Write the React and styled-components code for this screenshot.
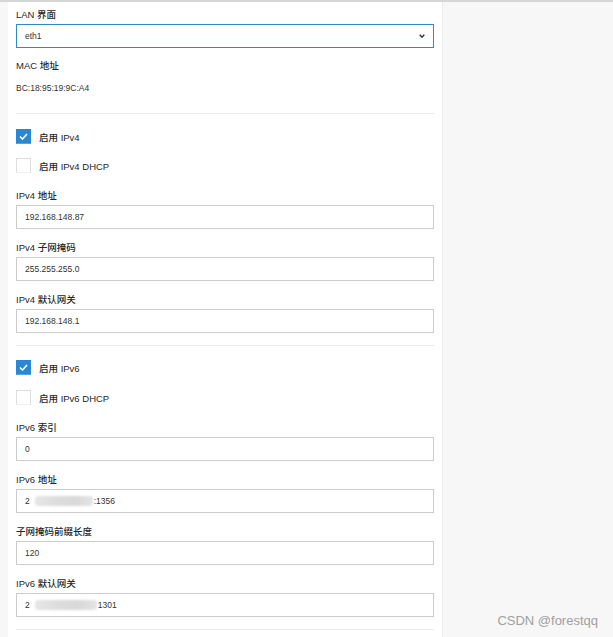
import React from "react";
import styled, { createGlobalStyle } from "styled-components";

const GlobalStyle = createGlobalStyle`
  html, body {
    margin: 0;
    padding: 0;
    background: #f7f7f7;
  }
  body {
    font-family: "Liberation Sans", "Noto Sans CJK SC", sans-serif;
    color: #333;
  }
`;

const Page = styled.div`
  position: relative;
  display: flex;
  min-height: 637px;
  border-top: 2px solid #d6d6d6;
  box-sizing: border-box;
  padding-left: 8px;
`;

const Panel = styled.div`
  width: 435px;
  box-sizing: border-box;
  background: #fff;
  border-right: 1px solid #ececec;
  padding: 6px 8px 0 8px;
`;

const Field = styled.div`
  margin-top: ${p => p.$top || 0}px;
  margin-bottom: ${p => (p.$bottom === undefined ? 12 : p.$bottom)}px;
`;

const Label = styled.div`
  height: 14px;
  line-height: 14px;
  font-size: 9.5px;
  font-weight: 500;
  color: #262626;
  margin-bottom: 2px;
  white-space: nowrap;
`;

const Static = styled.div`
  margin-top: 8px;
  height: 14px;
  line-height: 14px;
  font-size: 8.5px;
  color: #333;
`;

const Box = styled.div`
  display: flex;
  align-items: center;
  height: 24px;
  box-sizing: border-box;
  border: 1px solid ${p => (p.$focus ? "#2e8bc6" : "#cbcbcb")};
  padding: 0 8px;
  font-size: 8.5px;
  color: #333;
  background: #fff;
`;

const Grow = styled.span`
  flex: 1;
`;

const Chevron = styled.svg`
  width: 6px;
  height: 4px;
  margin-right: 0;
`;

const Hidden = styled.span`
  display: inline-block;
  width: ${p => p.$w}px;
  height: 10px;
  margin: 0 1px 0 5px;
  background: linear-gradient(90deg, #e6e6e6, #dcdcdc 40%, #d9d9d9 70%, #e4e4e4);
  border-radius: 3px;
  filter: blur(1.2px);
`;

const Divider = styled.div`
  height: 1px;
  background: #ebebeb;
  margin-top: ${p => p.$top || 0}px;
`;

const CheckRow = styled.label`
  display: flex;
  align-items: center;
  gap: 8px;
  height: 15px;
  margin-top: ${p => p.$top}px;
  font-size: 9.5px;
  font-weight: 500;
  color: #262626;
`;

const Tick = styled.span`
  display: flex;
  align-items: center;
  justify-content: center;
  width: 15px;
  height: 15px;
  box-sizing: border-box;
  background: ${p => (p.$on ? "#2b87d1" : "#fff")};
  border: 1px solid ${p => (p.$on ? "#2b87d1" : "#dedede")};
  border-bottom-color: ${p => (p.$on ? "#5aa3dc" : "#f0f0f0")};
`;

const Watermark = styled.div`
  position: absolute;
  right: 15px;
  bottom: 9px;
  font-size: 13px;
  color: #a0a0a0;
`;

function Check({ on, text, top }) {
  return (
    <CheckRow $top={top}>
      <Tick $on={on}>
        {on && (
          <svg width="9" height="7" viewBox="0 0 9 7">
            <polyline
              points="1,3.5 3.5,6 8,1"
              fill="none"
              stroke="#fff"
              strokeWidth="1.6"
            />
          </svg>
        )}
      </Tick>
      {text}
    </CheckRow>
  );
}

function TextField({ label, children, top }) {
  return (
    <Field $top={top}>
      <Label>{label}</Label>
      <Box>{children}</Box>
    </Field>
  );
}

export default function App() {
  return (
    <Page>
      <GlobalStyle />
      <Panel>
        <Field $bottom={11}>
          <Label>LAN 界面</Label>
          <Box $focus>
            <Grow>eth1</Grow>
            <Chevron viewBox="0 0 6 4">
              <polyline
                points="0.7,0.7 3,3.2 5.3,0.7"
                fill="none"
                stroke="#333"
                strokeWidth="1.4"
              />
            </Chevron>
          </Box>
        </Field>
        <Label>MAC 地址</Label>
        <Static>BC:18:95:19:9C:A4</Static>
        <Divider $top={18} />

        <Check on text="启用 IPv4" top={15} />
        <Check text="启用 IPv4 DHCP" top={14} />
        <TextField label="IPv4 地址" top={16}>192.168.148.87</TextField>
        <TextField label="IPv4 子网掩码">255.255.255.0</TextField>
        <TextField label="IPv4 默认网关">192.168.148.1</TextField>
        <Divider $top={1} />

        <Check on text="启用 IPv6" top={14} />
        <Check text="启用 IPv6 DHCP" top={15} />
        <TextField label="IPv6 索引" top={16}>0</TextField>
        <TextField label="IPv6 地址">
          2<Hidden $w={58} />:1356
        </TextField>
        <TextField label="子网掩码前缀长度">120</TextField>
        <TextField label="IPv6 默认网关">
          2<Hidden $w={62} />1301
        </TextField>
        <Divider $top={1} />
      </Panel>
      <Watermark>CSDN @forestqq</Watermark>
    </Page>
  );
}
